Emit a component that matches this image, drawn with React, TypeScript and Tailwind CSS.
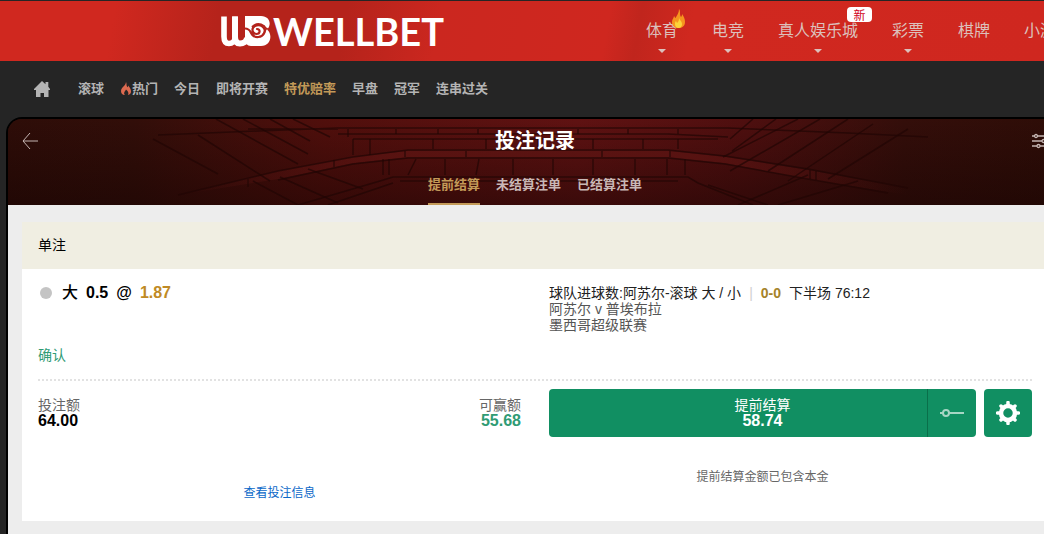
import type { ReactNode } from "react";
import clsx from "clsx";

type MainItem = {
  label: string;
  arrow?: boolean;
  badge?: "fire" | "new";
};

const mainNav: MainItem[] = [
  { label: "体育", arrow: true, badge: "fire" },
  { label: "电竞", arrow: true },
  { label: "真人娱乐城", arrow: true, badge: "new" },
  { label: "彩票", arrow: true },
  { label: "棋牌" },
  { label: "小游戏" }
];

const subNav = [
  { label: "滚球" },
  { label: "热门", hot: true },
  { label: "今日" },
  { label: "即将开赛" },
  { label: "特优赔率", active: true },
  { label: "早盘" },
  { label: "冠军" },
  { label: "连串过关" }
];

const tabs = ["提前结算", "未结算注单", "已结算注单"];

function Logo() {
  return (
    <a href="#" aria-label="WELLBET" className="flex w-[222px] shrink-0 items-center gap-0.5 text-white">
      <svg className="shrink-0" width="50" height="31" viewBox="0 0 50 31" fill="none">
        <path d="M3 .5v20c0 5 2 7 5 7s6-2 6-6V.5" stroke="currentColor" strokeWidth="5.600" />
        <path d="M14 .5v20c0 5 2 7 5 7s7-2 7-6" stroke="currentColor" strokeWidth="6" />
        <path d="M24 0h16c9 0 11 9 6 13.500c6 4.500 4 16.500-6 16.500H30c-4 0-6-3-6-7Z" fill="currentColor" />
        <path d="M24 12.500c5 0 5 3 7 6c3 4 10 3 12-1c3-6-4-10-9-7.500c-4 2-3 8 1.500 8c4 0 4-5 .500-5" stroke="#b3231c" strokeWidth="2.200" strokeLinecap="round" />
        <path d="M31 11c4-4 8-4 12-1c1 1 1 2 2.500 2.500c-1.500 1-1.500 4-3.500 6" stroke="#b3231c" strokeWidth="1.800" />
      </svg>
      <span className="font-[Lato,sans-serif] text-[38px] leading-[46px] font-bold">WELLBET</span>
    </a>
  );
}

function FireBadge() {
  return (
    <svg className="absolute -top-2.5 left-[26px]" width="13" height="19" viewBox="0 0 13 19">
      <path d="M7 0c2 3 0 5 2 8c1-1 1-2 1-3c2 3 3 5 3 8c0 4-3 6-6.500 6S0 17 0 13c0-3 2-4 2-6c1 1 1 2 1.500 2C5 6 7 4 7 0Z" fill="#f6941f" />
      <path d="M7 8c0 3 3 4 3 7c0 2-1 4-3.500 4S3 17 3 15c0-1 0-2 1-3l1 2c2-2 2-3 2-6Z" fill="#fbd43a" />
    </svg>
  );
}

function HomeIcon() {
  return (
    <svg width="16" height="16" viewBox="0 0 16 16" fill="currentColor">
      <path d="M8 0l3.500 3.200V1h2.800v4.800L16 8v1h-1.500v7h-4.500v-4H6.500v4H2V9H0V8Z" />
    </svg>
  );
}

function Flame() {
  return (
    <svg width="12" height="14" viewBox="0 0 12 14">
      <path d="M6 0c1 2 0 3 1 4.500s1 0 1-1c2 2 3 4 3 6c0 2-1 3-3 3.500c1-2 0-4-2-5.500c-1 2-3 3.500-1 5.500c-3 0-4-2-4-4c0-2 1-3 2-4s3-3 3-5Z" fill="#dd6a50" />
    </svg>
  );
}

// dark stadium stand behind the record title
function StadiumBackdrop() {
  return (
    <svg className="absolute inset-0 size-full" viewBox="0 0 1054 86" preserveAspectRatio="none">
      <defs>
        <linearGradient id="base">
          <stop offset="0" stopColor="#2e0d08" />
          <stop offset=".12" stopColor="#320e09" />
          <stop offset=".3" stopColor="#510f0c" />
          <stop offset=".54" stopColor="#601212" />
          <stop offset=".7" stopColor="#4f0f0f" />
          <stop offset=".85" stopColor="#340e0a" />
          <stop offset="1" stopColor="#2e0d07" />
        </linearGradient>
        <linearGradient id="shade" x2="0" y2="1">
          <stop offset="0" stopColor="#150302" stopOpacity="0" />
          <stop offset="1" stopColor="#150302" stopOpacity=".5" />
        </linearGradient>
        <linearGradient id="rail">
          <stop offset="0" stopColor="#5c1412" stopOpacity="0" />
          <stop offset=".3" stopColor="#5c1412" stopOpacity=".8" />
          <stop offset=".7" stopColor="#5c1412" stopOpacity=".8" />
          <stop offset="1" stopColor="#5c1412" stopOpacity="0" />
        </linearGradient>
      </defs>
      <rect width="1054" height="86" fill="url(#base)" />
      <rect width="1054" height="86" fill="url(#shade)" />
      <path d="M170 76L270 52L345 38L400 32H660L717 38L800 51L900 69V76L800 60L717 44L660 38H400L345 44L270 60Z" fill="url(#rail)" />
      <g fill="none" stroke="#210504" strokeOpacity=".7" strokeWidth="1.500">
        <path d="M150 16L250 12L330 9H720L840 14L920 18M240 10H330M330 15H660L720 18M345 20H710M170 76L270 52L345 38L400 31H660L717 37L800 50L900 69M270 61L345 45L400 39H660L717 45L800 60L880 74" />
        <path d="M290 86L372 62L385 58H680L690 64L745 86M320 86L385 64M392 62H670M700 66L760 86" />
        <path d="M208 0L290 45M235 0L300 35M262 0L302 22M285 0L322 18M190 16L262 62M145 20L210 55M245 62L290 86M272 58L330 84M300 50L355 70" />
        <path d="M812 0L722 52M840 0L760 52M790 0L715 38M865 5L780 62M768 0L724 32M745 0L722 20M900 10L820 60M730 86L800 56M770 86L850 62" />
        <path d="M340 10v8M388 10v5M430 10v5M470 10v5M520 10v5M570 10v5M620 10v5M670 10v5M345 20v16M362 20v16M425 20v10M478 20v10M530 20v10M585 20v10M635 20v10M670 20v10" />
        <path d="M375 40v16M381 40v16M408 40l-8 16M437 40v16M471 40l-3 16M505 40v16M545 40v16M585 40v16M627 40v16M659 40v16M677 40v16M326 41v7M397 32v6M458 32v6M594 32v6M662 32v6M802 51v9M808 52v9M240 60v8" />
      </g>
    </svg>
  );
}

function GearIcon() {
  return (
    <svg width="24" height="24" viewBox="0 0 24 24" fill="none" stroke="white">
      <circle cx="12" cy="12" r="7" strokeWidth="4.500" />
      <path d="M12 1.500v3M12 19.500v3M1.500 12h3M19.500 12h3M5 5l2 2M17 17l2 2M5 19l2-2M17 7l2-2" strokeWidth="3.500" strokeLinecap="round" />
    </svg>
  );
}

function Amount({ label, children, className }: { label: string; children: ReactNode; className?: string }) {
  return (
    <div className={className}>
      <p className="text-sm leading-4 text-[#666]">{label}</p>
      <p className="text-base leading-4 font-bold">{children}</p>
    </div>
  );
}

export default function App() {
  return (
    <div className="flex min-h-screen flex-col overflow-hidden bg-[#252525] font-['Liberation_Sans','Noto_Sans_CJK_SC',sans-serif] whitespace-nowrap text-black">
      <header className="mt-px flex h-[60px] items-center bg-[linear-gradient(100deg,#d0281f_0%,#d0281f_11%,#b5231b_21%,#b5231b_33%,#cb271f_42%,#cf271f_58%,#c0251d_61%,#d0281f_66%,#cf271f_100%)] pl-[221px]">
        <Logo />
        <nav className="ml-[203px] flex gap-[34px] text-base leading-6 text-[#dcc0bc]">
          {mainNav.map((item) => (
            <a key={item.label} href="#" className="relative shrink-0">
              {item.label}
              {item.badge === "fire" && <FireBadge />}
              {item.badge === "new" && (
                <span className="absolute -top-3 left-[69px] h-[15px] w-[25px] overflow-hidden rounded bg-white text-center text-xs leading-[18px] text-[#d0021b]">新</span>
              )}
              {item.arrow && (
                <svg className="absolute top-[30px] left-1/2 -translate-x-1/2" width="8" height="4" viewBox="0 0 8 4">
                  <path d="M0 0h8L4 4Z" fill="currentColor" />
                </svg>
              )}
            </a>
          ))}
        </nav>
      </header>

      <nav className="flex h-14 items-center gap-4 pl-[34px] text-[13px] leading-5 font-bold text-[#b4b4b4]">
        <a href="#" aria-label="主页" className="mr-3"><HomeIcon /></a>
        {subNav.map((item) => (
          <a key={item.label} href="#" className={clsx("flex items-center", item.active && "text-[#c39a58]")}>
            {item.hot && <Flame />}
            {item.label}
          </a>
        ))}
      </nav>

      <main className="-mr-5 ml-1.5 flex flex-1 flex-col overflow-hidden rounded-tl-2xl border-2 border-b-0 border-black bg-[#2e0d08]">
        <div className="relative h-[86px]">
          <StadiumBackdrop />
          <div className="relative flex h-11 items-center justify-between px-3.5 text-[#c4b5b2]">
            <button type="button" aria-label="返回">
              <svg width="16" height="16" viewBox="0 0 16 16" fill="none" stroke="currentColor">
                <path d="M8 0L1 8l7 8M1 8h15" />
              </svg>
            </button>
            <h1 className="text-xl leading-6 font-bold text-white">投注记录</h1>
            <button type="button" aria-label="筛选">
              <svg width="16" height="16" viewBox="0 0 16 16" fill="none" stroke="currentColor" strokeWidth="1.300">
                <path d="M0 3h2.500M5.500 3H16M0 8h10M13 8h3M0 13h5M8 13h8" />
                <circle cx="4" cy="3" r="1.500" />
                <circle cx="11.500" cy="8" r="1.500" />
                <circle cx="6.500" cy="13" r="1.500" />
              </svg>
            </button>
          </div>
          <div role="tablist" className="relative flex h-[42px] justify-center gap-4 text-[13px] font-bold text-[#c9b8b6]">
            {tabs.map((tab, index) => (
              <button
                key={tab}
                type="button"
                role="tab"
                aria-selected={index === 0}
                className={clsx("border-b-2 pt-1", index === 0 ? "border-[#c39a58] text-[#c39a58]" : "border-transparent")}
              >
                {tab}
              </button>
            ))}
          </div>
        </div>

        <div className="flex-1 bg-[#ededed] px-3.5 pt-[17px] pb-3">
          <section className="bg-white">
            <h2 className="bg-[#f0eee2] px-4 text-sm leading-[47px]">单注</h2>
            <div className="px-4">
              <div className="grid h-[110px] grid-cols-2 gap-x-7 pt-4">
                <div>
                  <div className="flex items-center gap-2 text-base leading-4 font-bold">
                    <span className="mx-0.5 size-3 rounded-full bg-[#c4c4c4]" />
                    <span className="font-medium">大</span>
                    <span>0.5</span>
                    <span>@</span>
                    <span className="text-[#c08a24]">1.87</span>
                  </div>
                  <p className="mt-[46px] text-sm leading-4 text-[#2f9b74]">确认</p>
                </div>
                <div className="text-sm leading-4 text-[#555]">
                  <p className="flex gap-2 text-[#222]">
                    <span>球队进球数:阿苏尔-滚球 大 / 小</span>
                    <span className="text-[#d0d0d0]">|</span>
                    <b className="text-[#a5832a]">0-0</b>
                    <span>下半场 76:12</span>
                  </p>
                  <p>阿苏尔 v 普埃布拉</p>
                  <p>墨西哥超级联赛</p>
                </div>
              </div>
              <hr className="border-t-2 border-dotted border-[#e2e2e2]" />
              <div className="grid h-[140px] grid-cols-2 gap-x-7 pt-2">
                <div className="pt-2">
                  <div className="flex justify-between">
                    <Amount label="投注额">64.00</Amount>
                    <Amount label="可赢额" className="text-right text-[#2f9b74]">55.68</Amount>
                  </div>
                  <a href="#" className="mt-14 block text-center text-xs leading-4 text-[#0a68c8]">查看投注信息</a>
                </div>
                <div className="flex items-start gap-2">
                  <div className="flex-1">
                    <div className="flex h-12 overflow-hidden rounded bg-[#118f62] text-white">
                      <button type="button" className="flex-1 pl-[49px]">
                        <span className="block text-sm leading-4">提前结算</span>
                        <span className="block text-base leading-4 font-bold">58.74</span>
                      </button>
                      <button type="button" aria-label="部分结算" className="flex w-[49px] items-center justify-center border-l border-[#0a6f4a]">
                        <svg width="24" height="10" viewBox="0 0 24 10" fill="none" stroke="#a7d6c4" strokeWidth="2">
                          <path d="M0 5h3M9 5h15" />
                          <circle cx="6" cy="5" r="3" />
                        </svg>
                      </button>
                    </div>
                    <p className="mt-8 text-center text-xs leading-4 text-[#666]">提前结算金额已包含本金</p>
                  </div>
                  <button type="button" aria-label="设置" className="flex size-12 items-center justify-center rounded bg-[#118f62]">
                    <GearIcon />
                  </button>
                </div>
              </div>
            </div>
          </section>
        </div>
      </main>
    </div>
  );
}
